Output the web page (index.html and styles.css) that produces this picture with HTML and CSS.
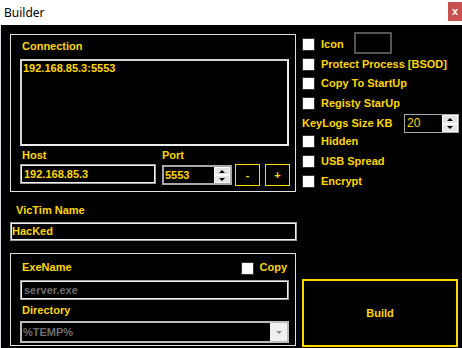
FILE: index.html
```html
<!DOCTYPE html>
<html>
<head>
    <title>Builder</title>
    <link rel="stylesheet" href="styles.css">
</head>
<body>
    <div class="titlebar">
        <span class="title">Builder</span>
        <span class="close">x</span>
    </div>
    <div class="window">
        <div class="left">
            <div class="group conn">
                <div class="lbl">Connection</div>
                <div class="listbox">
                    <div class="item">192.168.85.3:5553</div>
                </div>
                <div class="hostrow">
                    <div class="field host">
                        <div class="lbl">Host</div>
                        <div class="input">192.168.85.3</div>
                    </div>
                    <div class="field port">
                        <div class="lbl">Port</div>
                        <div class="spin">
                            <div class="val">5553</div>
                            <div class="arrows">
                                <div class="arr up"></div>
                                <div class="arr down"></div>
                            </div>
                        </div>
                    </div>
                    <button class="btn minus">-</button>
                    <button class="btn plus">+</button>
                </div>
            </div>

            <div class="lbl victim-lbl">VicTim Name</div>
            <div class="input victim">HacKed</div>

            <div class="group exe">
                <div class="exe-head">
                    <div class="lbl">ExeName</div>
                    <div class="copy"><span class="cb"></span><span>Copy</span></div>
                </div>
                <div class="input grey">server.exe</div>
                <div class="lbl dir-lbl">Directory</div>
                <div class="combo">
                    <div class="combo-val">%TEMP%</div>
                    <div class="combo-btn"><span class="tri"></span></div>
                </div>
            </div>
        </div>

        <div class="right">
            <div class="opts">
                <div class="opt top">
                    <span class="cb"></span><span class="txt">Icon</span>
                    <span class="iconbox"></span>
                </div>
                <div class="opt top"><span class="cb"></span><span class="txt">Protect Process [BSOD]</span></div>
                <div class="opt top"><span class="cb"></span><span class="txt">Copy To StartUp</span></div>
                <div class="opt top"><span class="cb"></span><span class="txt">Registy StarUp</span></div>
                <div class="keylogs">
                    <span class="kl-lbl">KeyLogs Size KB</span>
                    <div class="spin small">
                        <div class="val">20</div>
                        <div class="arrows">
                            <div class="arr up"></div>
                            <div class="arr down"></div>
                        </div>
                    </div>
                </div>
                <div class="opt"><span class="cb"></span><span class="txt">Hidden</span></div>
                <div class="opt"><span class="cb"></span><span class="txt">USB Spread</span></div>
                <div class="opt"><span class="cb"></span><span class="txt">Encrypt</span></div>
            </div>
            <button class="build">Build</button>
        </div>
    </div>
</body>
</html>
```

FILE: styles.css
```css
* {
    box-sizing: border-box;
}

body {
    margin: 0;
    width: 462px;
    height: 348px;
    overflow: hidden;
    background: #000;
    font-family: "Liberation Sans", Arial, sans-serif;
    font-size: 11px;
    font-weight: bold;
    color: #ffd700;
}

.titlebar {
    height: 25px;
    background: #fff;
    display: flex;
    justify-content: space-between;
    align-items: flex-start;
}

.title {
    font-family: "Noto Sans", "Open Sans", sans-serif;
    font-weight: normal;
    font-size: 12px;
    line-height: 16px;
    color: #000;
    padding: 5px 0 0 4px;
}

.close {
    margin-top: 2px;
    width: 14px;
    height: 19px;
    background: #c75050;
    color: #fff;
    font-size: 11px;
    line-height: 18px;
    text-align: center;
}

.window {
    display: flex;
    height: 323px;
    border-left: 1px solid #dcdce6;
}

.left {
    width: 296px;
    padding-left: 9px;
    display: flex;
    flex-direction: column;
}

.lbl {
    line-height: 13px;
}

.group {
    width: 286px;
    border: 1px solid #e0e0e0;
}

/* connection box */
.conn {
    margin-top: 9px;
    height: 158px;
    padding: 5px 0 0 9px;
}

.conn > .lbl {
    margin-left: 2px;
}

.listbox {
    margin-top: 6px;
    width: 269px;
    height: 87px;
    border: 2px solid #ececec;
    border-left-color: #d4d4d4;
    border-top-color: #d4d4d4;
    padding: 0 1px;
}

.item {
    line-height: 15px;
}

.hostrow {
    display: flex;
    align-items: flex-start;
    margin-top: 3px;
}

.field .lbl {
    margin-left: 2px;
    margin-bottom: 2px;
}

.host {
    width: 136px;
}

.port {
    width: 70px;
    margin-left: 6px;
}

.port .lbl {
    margin-left: 0;
    margin-bottom: 3px;
}

.input {
    height: 20px;
    border: 1px solid #a0a0a0;
    box-shadow: inset 0 0 0 1px #f4f4f4;
    padding: 0 3px;
    line-height: 18px;
    white-space: nowrap;
}

.spin {
    display: flex;
    height: 20px;
    border: 2px solid #a8a8a8;
}

.spin .val {
    flex: 1;
    line-height: 16px;
    padding-left: 1px;
}

.arrows {
    width: 16px;
    display: flex;
    flex-direction: column;
    background: #f0f0f0;
}

.arr {
    flex: 1;
    display: flex;
    align-items: center;
    justify-content: center;
    background: #e4e4e4;
    border: 1px solid #fafafa;
}

.arr::after {
    content: "";
    border-left: 3px solid transparent;
    border-right: 3px solid transparent;
}

.up::after {
    border-bottom: 3px solid #000;
}

.down::after {
    border-top: 3px solid #000;
}

.btn {
    margin-top: 15px;
    width: 25px;
    height: 22px;
    padding: 0;
    border: 1px solid #ffd700;
    background: #000;
    color: #ffd700;
    font: bold 11px "Liberation Sans", Arial, sans-serif;
}

.minus {
    margin-left: 3px;
}

.plus {
    margin-left: 5px;
}

.victim-lbl {
    margin: 12px 0 0 6px;
}

.victim {
    margin-top: 5px;
    width: 287px;
    height: 19px;
    line-height: 17px;
    padding-left: 1px;
}

/* exe box */
.exe {
    margin-top: 12px;
    height: 93px;
    padding: 7px 0 0 9px;
}

.exe-head {
    width: 269px;
    display: flex;
    justify-content: space-between;
}

.exe-head > .lbl,
.dir-lbl {
    margin-left: 2px;
}

.copy {
    display: flex;
    align-items: flex-start;
    margin-right: 2px;
    line-height: 13px;
}

.copy .cb {
    margin: 1px 6px 0 0;
}

.exe .input {
    margin-top: 5px;
    width: 269px;
}

.grey {
    color: #6e6e6e;
}

.dir-lbl {
    margin-top: 4px;
}

.combo {
    margin-top: 4px;
    width: 269px;
    height: 22px;
    display: flex;
    border: 2px solid #bdbdbd;
    color: #6e6e6e;
}

.combo-val {
    flex: 1;
    line-height: 18px;
    padding-left: 1px;
}

.combo-btn {
    width: 17px;
    background: #f0f0f0;
    display: flex;
    align-items: center;
    justify-content: center;
}

.tri {
    border-left: 3px solid transparent;
    border-right: 3px solid transparent;
    border-top: 3px solid #8a8a8a;
}

/* right side */
.right {
    margin-left: 5px;
    width: 160px;
    display: flex;
    flex-direction: column;
}

.opts {
    padding-top: 13px;
}

.opt {
    display: flex;
    align-items: flex-start;
    height: 20px;
}

.opt.top {
    height: 19.5px;
}

.cb {
    display: inline-block;
    width: 13px;
    height: 13px;
    background: #fff;
    border: 1px solid #333;
    flex-shrink: 0;
}

.txt {
    margin-left: 6px;
    line-height: 13px;
    white-space: nowrap;
}

.iconbox {
    margin: -6px 0 0 10px;
    width: 38px;
    height: 22px;
    border: 2px solid #555;
}

.keylogs {
    display: flex;
    align-items: flex-start;
    justify-content: space-between;
    margin-top: -2px;
    height: 21px;
    padding-right: 3px;
}

.kl-lbl {
    margin-top: 3px;
    line-height: 13px;
}

.spin.small {
    width: 55px;
    height: 19px;
    border-width: 1px;
    border-color: #a8a8a8;
}

.spin.small .val {
    font-weight: normal;
    font-size: 12px;
    padding-left: 2px;
}

.build {
    margin-top: auto;
    margin-bottom: 1px;
    width: 156px;
    height: 68px;
    border: 2px solid #ffd700;
    background: #000;
    color: #ffd700;
    font: bold 11px "Liberation Sans", Arial, sans-serif;
}
```
